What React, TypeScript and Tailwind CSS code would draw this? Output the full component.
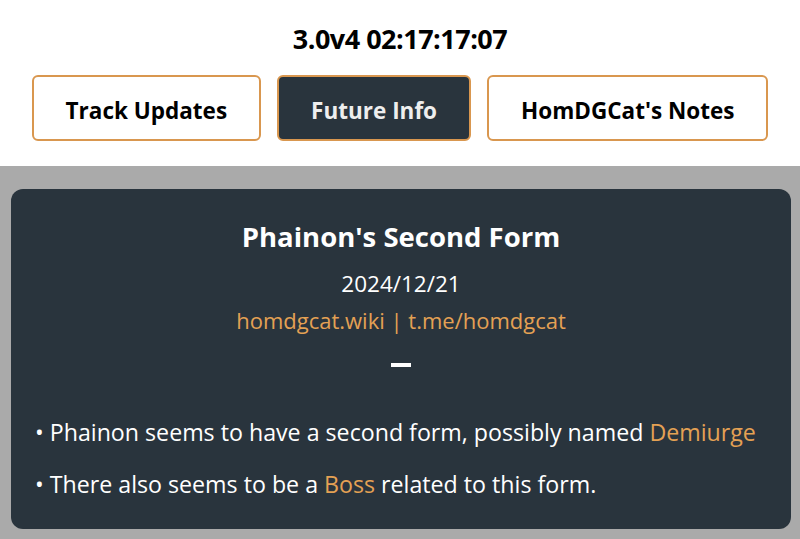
export default function App() {
  const tabs = [
    { label: "Track Updates", active: false },
    { label: "Future Info", active: true },
    { label: "HomDGCat's Notes", active: false },
  ];

  return (
    <div className="min-h-[539px] w-full flex flex-col bg-[#aaaaaa] font-['Open_Sans',sans-serif]">
      <div className="bg-white h-[166px] flex flex-col items-center pt-[22px]">
        <h1 className="text-[27px] leading-[34px] font-bold text-black tracking-[-0.5px]">3.0v4 02:17:17:07</h1>
        <div className="mt-[19px] flex gap-[16px]">
          {tabs.map((t) => (
            <button
              key={t.label}
              className={`h-[66px] px-[32px] pt-[5px] rounded-[6px] border-2 border-[#d9974f] text-[22.5px] font-bold ${
                t.active ? "bg-[#29343d] text-[#eeeeee]" : "bg-white text-black"
              }`}
            >
              {t.label}
            </button>
          ))}
        </div>
      </div>

      <div className="px-[11px] pt-[23px] pb-[11px] pr-[9px]">
        <div className="bg-[#29343d] rounded-[12px] text-white pt-[28px] pb-[30px] px-[24px]">
          <h2 className="text-center text-[27.5px] leading-[40px] font-bold">Phainon's Second Form</h2>
          <p className="text-center text-[22.5px] leading-[30px] mt-[12px]">2024/12/21</p>
          <p className="text-center text-[22px] leading-[30px] mt-[6px] text-[#e4a154]">
            homdgcat.wiki | t.me/homdgcat
          </p>
          <div className="flex justify-center mt-[28px]">
            <div className="w-[20px] h-[4px] bg-white" />
          </div>
          <ul className="mt-[50px] flex flex-col gap-[22px] text-[23.2px] leading-[30px]">
            <li>
              • Phainon seems to have a second form, possibly named{" "}
              <span className="text-[#e4a154]">Demiurge</span>
            </li>
            <li>
              • There also seems to be a <span className="text-[#e4a154]">Boss</span> related to this form.
            </li>
          </ul>
        </div>
      </div>
    </div>
  );
}
